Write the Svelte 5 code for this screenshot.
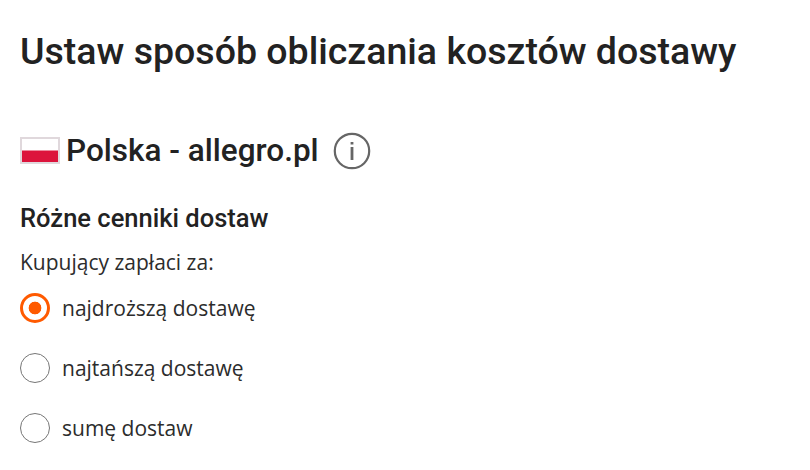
<script>
  const options = [
    { value: 'max', label: 'najdroższą dostawę' },
    { value: 'min', label: 'najtańszą dostawę' },
    { value: 'sum', label: 'sumę dostaw' }
  ];

  let selected = $state('max');
</script>

<main class="page">
  <h1>Ustaw sposób obliczania kosztów dostawy</h1>

  <h2>
    <svg class="flag" viewBox="0 0 40 27" width="40" height="27" aria-hidden="true">
      <rect width="40" height="27" fill="#e0d8dc" />
      <rect x="2" y="2" width="36" height="12" fill="#fff" />
      <rect x="2" y="13.5" width="36" height="11.5" fill="#dc143c" />
    </svg>
    <span>Polska - allegro.pl</span>
    <svg class="info" viewBox="0 0 38 38" width="38" height="38" aria-hidden="true">
      <circle cx="19" cy="19" r="17.2" fill="none" stroke="#666" stroke-width="2.2" />
      <path d="M19 10v2.6M19 15v13" stroke="#666" stroke-width="2.8" />
    </svg>
  </h2>

  <h3>Różne cenniki dostaw</h3>
  <p id="payer">Kupujący zapłaci za:</p>

  <div class="options" role="radiogroup" aria-labelledby="payer">
    {#each options as option}
      <label>
        <input type="radio" name="cost" value={option.value} bind:group={selected} />
        <span>{option.label}</span>
      </label>
    {/each}
  </div>
</main>

<style>
  :global(body) {
    margin: 0;
    background: #fff;
  }

  .page {
    padding: 28px 20px 0;
    color: #2c2c2c;
    font-family: 'Open Sans', sans-serif;
    font-size: 21px;
    font-weight: 400;
  }

  h1, h2, h3 {
    margin: 0;
    color: #222;
    font-family: Roboto, sans-serif;
    font-weight: 500;
    white-space: nowrap;
  }

  h1 {
    font-size: 37.5px;
    line-height: 46px;
  }

  h2 {
    display: flex;
    align-items: center;
    height: 40px;
    margin-top: 56px;
    font-size: 31.5px;
  }

  .flag {
    margin-right: 6px;
  }

  .info {
    margin: 2px 0 0 14px;
  }

  h3 {
    margin-top: 32px;
    font-size: 25.5px;
    line-height: 32px;
  }

  p {
    margin: 13px 0 0;
    line-height: 30px;
  }

  .options {
    display: grid;
    gap: 30px;
    margin-top: 16px;
  }

  label {
    display: flex;
    align-items: center;
    gap: 12px;
    height: 30px;
    cursor: pointer;
  }

  input {
    appearance: none;
    box-sizing: border-box;
    width: 30px;
    height: 30px;
    margin: 0;
    border: 1px solid #767676;
    border-radius: 50%;
    background: #fff;
    cursor: pointer;
  }

  input:checked {
    border: 3px solid #ff5a00;
    background: radial-gradient(circle, #ff5a00 6px, #fff 6.7px);
  }
</style>
